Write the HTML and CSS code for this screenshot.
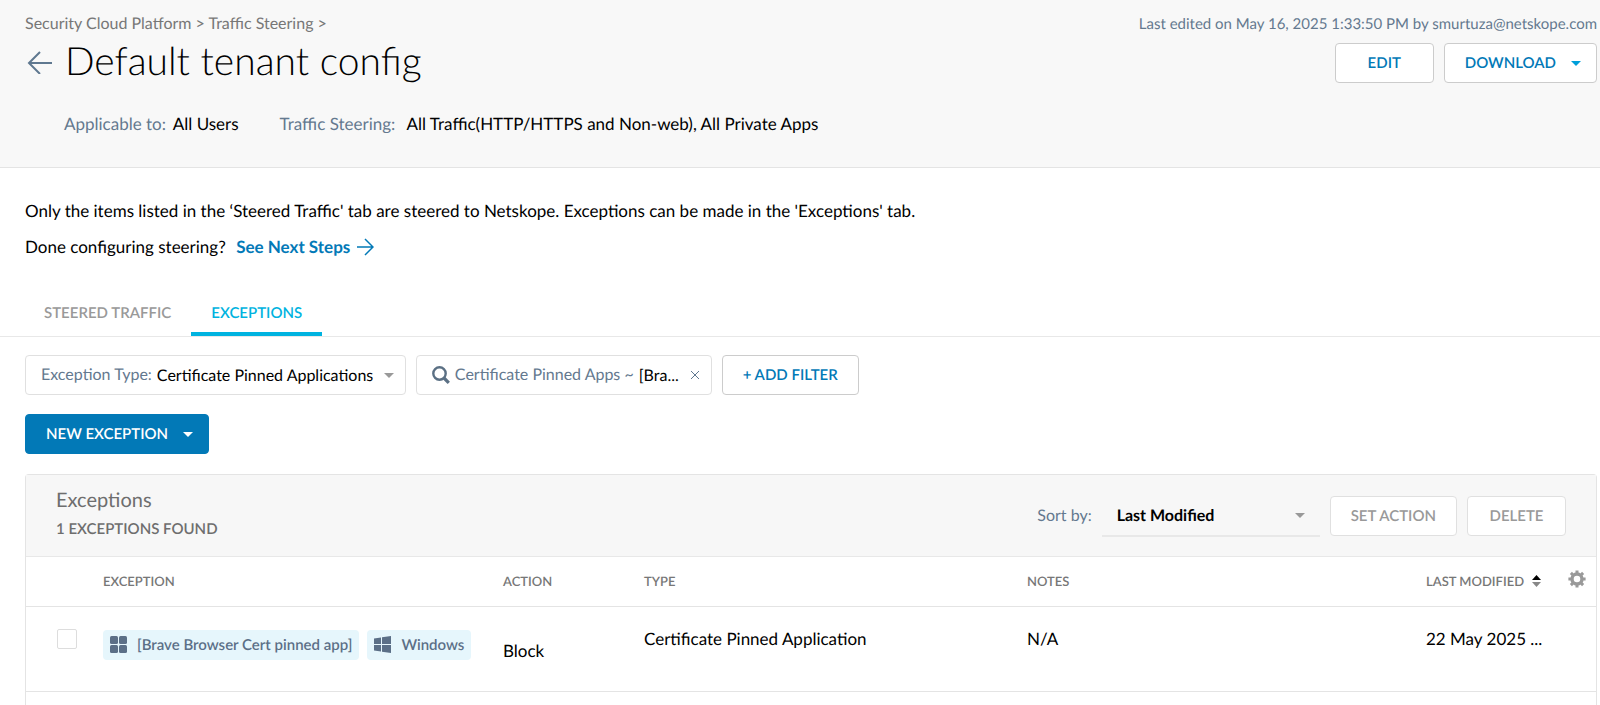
FILE: index.html
```
<!DOCTYPE html>
<html lang="en">
<head>
    <meta charset="UTF-8">
    <meta name="viewport" content="width=device-width, initial-scale=1.0">
    <title>Default tenant config</title>
    <link rel="stylesheet" href="styles.css">
</head>
<body>
    <header class="page-header">
        <div class="header-main">
            <nav class="breadcrumb">
                <a href="#">Security Cloud Platform</a> &gt; <a href="#">Traffic Steering</a> &gt;
            </nav>
            <div class="title-row">
                <a class="back" href="#" aria-label="Back">
                    <svg width="26" height="26" viewBox="0 0 26 26" fill="none" stroke="#5f7890" stroke-width="2">
                        <path d="M25 15H2M13 4L2 15l11 11"/>
                    </svg>
                </a>
                <h1>Default tenant config</h1>
            </div>
            <div class="summary">
                <div><span class="muted">Applicable to:</span> All Users</div>
                <div><span class="muted">Traffic Steering:</span>&nbsp; All Traffic(HTTP/HTTPS and Non-web), All Private Apps</div>
            </div>
        </div>
        <div class="header-side">
            <p class="edited">Last edited on May 16, 2025 1:33:50 PM by smurtuza@netskope.com</p>
            <div class="actions">
                <button type="button" class="btn btn-edit">EDIT</button>
                <button type="button" class="btn">DOWNLOAD <span class="caret caret-blue"></span></button>
            </div>
        </div>
    </header>

    <main>
        <section class="intro">
            <p>Only the items listed in the ‘Steered Traffic' tab are steered to Netskope. Exceptions can be made in the 'Exceptions' tab.</p>
            <p>Done configuring steering?
                <a class="next" href="#">See Next Steps
                    <svg width="18" height="18" viewBox="0 0 18 18" fill="none" stroke="currentColor" stroke-width="1.5">
                        <path d="M1 9h15.500M9 1l8 8-8 8"/>
                    </svg>
                </a>
            </p>
        </section>

        <nav class="tabs">
            <a href="#" class="tab">STEERED TRAFFIC</a>
            <a href="#" class="tab active">EXCEPTIONS</a>
        </nav>

        <div class="content">
            <div class="filters">
                <div class="filter">
                    <label class="muted" for="exception-type">Exception Type:</label>
                    <select id="exception-type">
                        <option>Certificate Pinned Applications</option>
                    </select>
                    <span class="caret"></span>
                </div>
                <div class="filter filter-search">
                    <svg width="18" height="18" viewBox="0 0 18 18" fill="none" stroke="#5b7084">
                        <circle cx="7.500" cy="7.500" r="6.200" stroke-width="2.400"/>
                        <path d="M12 12l4.800 4.800" stroke-width="3.200"/>
                    </svg>
                    <label class="muted" for="app-search">Certificate Pinned Apps ~</label>
                    <input type="text" id="app-search" value="[Bra...">
                    <button type="button" class="clear" aria-label="Remove filter">
                        <svg width="10" height="10" viewBox="0 0 10 10" stroke="#5f7890">
                            <path d="M1 1l8 8M9 1L1 9"/>
                        </svg>
                    </button>
                </div>
                <button type="button" class="btn">+ ADD FILTER</button>
            </div>

            <button type="button" class="btn btn-primary">NEW EXCEPTION <span class="caret caret-white"></span></button>

            <section class="panel">
                <div class="panel-header">
                    <div>
                        <h2>Exceptions</h2>
                        <p class="count">1 EXCEPTIONS FOUND</p>
                    </div>
                    <div class="panel-tools">
                        <label class="muted" for="sort">Sort by:</label>
                        <div class="sort">
                            <select id="sort">
                                <option>Last Modified</option>
                            </select>
                            <span class="caret"></span>
                        </div>
                        <button type="button" class="btn btn-off" disabled>SET ACTION</button>
                        <button type="button" class="btn btn-off btn-delete" disabled>DELETE</button>
                    </div>
                </div>

                <table>
                    <colgroup>
                        <col class="col-check">
                        <col class="col-exception">
                        <col class="col-action">
                        <col class="col-type">
                        <col>
                        <col class="col-modified">
                        <col class="col-gear">
                    </colgroup>
                    <thead>
                        <tr>
                            <th></th>
                            <th>EXCEPTION</th>
                            <th>ACTION</th>
                            <th>TYPE</th>
                            <th>NOTES</th>
                            <th>
                                <button type="button" class="sort-toggle">LAST MODIFIED
                                    <svg width="9" height="12" viewBox="0 0 9 12">
                                        <path d="M0 5l4.500-5L9 5z" fill="#000"/>
                                        <path d="M0 7h9l-4.500 5z" fill="#888"/>
                                    </svg>
                                </button>
                            </th>
                            <th>
                                <button type="button" class="gear" aria-label="Table settings">
                                    <svg width="18" height="18" viewBox="-9 -9 18 18" fill="none" stroke="#999">
                                        <circle r="5" stroke-width="3.400"/>
                                        <path d="M0-6v-2.600M0 6v2.600M-6 0h-2.600M6 0h2.600M4.300-4.300l1.800-1.800M-4.300-4.300l-1.800-1.800M4.300 4.300l1.800 1.800M-4.300 4.300l-1.800 1.800" stroke-width="3"/>
                                    </svg>
                                </button>
                            </th>
                        </tr>
                    </thead>
                    <tbody>
                        <tr>
                            <td class="cell-check"><input type="checkbox" aria-label="Select exception"></td>
                            <td>
                                <div class="tags">
                                    <span class="tag">
                                        <svg width="17" height="17" viewBox="0 0 17 17" fill="#5b6f87">
                                            <rect width="8" height="8" rx="1.500"/>
                                            <rect x="9" width="8" height="8" rx="1.500"/>
                                            <rect y="9" width="8" height="8" rx="1.500"/>
                                            <rect x="9" y="9" width="8" height="8" rx="1.500"/>
                                        </svg>
                                        [Brave Browser Cert pinned app]
                                    </span>
                                    <span class="tag">
                                        <svg width="17" height="17" viewBox="0 0 17 17" fill="#5b6f87">
                                            <path d="M0 2.500l7-1v6.600H0zM8 1.300L17 0v8.100H8zM0 9h7v6.500l-7-1zM8 9h9v8l-9-1.300z"/>
                                        </svg>
                                        Windows
                                    </span>
                                </div>
                            </td>
                            <td class="cell-action">Block</td>
                            <td>Certificate Pinned Application</td>
                            <td>N/A</td>
                            <td>22 May 2025 ...</td>
                            <td></td>
                        </tr>
                    </tbody>
                </table>
            </section>
        </div>
    </main>
</body>
</html>
```

FILE: styles.css
```
* {
    box-sizing: border-box;
}
body {
    display: flex;
    flex-direction: column;
    min-height: 100vh;
    margin: 0;
    font-family: Lato, sans-serif;
    font-size: 17px;
    line-height: 24px;
    color: #000;
    background: #fff;
    text-rendering: geometricPrecision;
}
h1, h2, p {
    margin: 0;
}
a {
    color: inherit;
    text-decoration: none;
}
svg {
    display: block;
    flex: none;
}
button, select, input {
    font-family: inherit;
    color: inherit;
    text-rendering: inherit;
}
button {
    cursor: pointer;
}
.muted {
    color: #64798f;
}

/* Header */
.page-header {
    display: flex;
    justify-content: space-between;
    padding: 12px 3px 31px 25px;
    background: #f8f8f8;
    border-bottom: 1px solid #e4e4e4;
}
.breadcrumb {
    font-size: 16px;
    line-height: 23px;
    color: #777;
}
.title-row {
    display: flex;
    align-items: center;
    gap: 12px;
    padding-left: 2px;
}
h1 {
    font-size: 39px;
    font-weight: 300;
    line-height: 52px;
}
.summary {
    display: flex;
    gap: 41px;
    margin-top: 25px;
    padding-left: 39px;
}
.summary .muted {
    margin-right: 3px;
}
.header-side {
    display: flex;
    flex-direction: column;
    align-items: flex-end;
}
.edited {
    font-size: 15px;
    color: #64798f;
}
.actions {
    display: flex;
    gap: 10px;
    margin-top: 7px;
}

/* Buttons */
.btn {
    display: inline-flex;
    align-items: center;
    justify-content: center;
    gap: 15px;
    height: 40px;
    padding: 0 20px;
    border: 1px solid #ccc;
    border-radius: 4px;
    background: #fff;
    font-size: 15px;
    font-weight: 600;
    color: #0279b7;
}
.btn .caret {
    margin-right: -5px;
}
.btn-edit, .btn-delete {
    min-width: 99px;
}
.btn-primary {
    align-self: flex-start;
    margin-top: 19px;
    border-color: #0279b7;
    background: #0279b7;
    color: #fff;
}
.btn-off {
    border-color: #e0e0e0;
    color: #999;
}
.caret {
    flex: none;
    border: 5px solid transparent;
    border-top-color: #999;
    border-bottom: 0;
}
.caret-blue {
    border-top-color: #009fda;
}
.caret-white {
    border-top-color: #fff;
}

/* Intro */
.intro {
    display: flex;
    flex-direction: column;
    gap: 12px;
    padding: 31px 25px 27px;
}
.next {
    display: inline-flex;
    align-items: center;
    gap: 6px;
    margin-left: 6px;
    font-weight: 700;
    color: #0279b7;
}

/* Tabs */
.tabs {
    display: flex;
    padding-left: 24px;
    border-bottom: 1px solid #e8e8e8;
}
.tab {
    padding: 15px 20px 7px;
    border-bottom: 4px solid transparent;
    font-size: 15px;
    font-weight: 600;
    color: #999;
}
.tab.active {
    border-color: #00b3e0;
    color: #00b3e0;
}

/* Filters */
main, .content, .panel {
    display: flex;
    flex: 1;
    flex-direction: column;
}
.content {
    padding: 18px 3px 0 25px;
}
.filters {
    display: flex;
    gap: 10px;
}
.filter {
    display: flex;
    align-items: center;
    gap: 5px;
    height: 40px;
    padding: 0 11px 0 15px;
    border: 1px solid #e0e0e0;
    border-radius: 4px;
    font-size: 16px;
}
.filter select, .filter input {
    padding: 0;
    border: 0;
    background: none;
    font-size: 16px;
    appearance: none;
}
.filter .caret {
    margin-left: 5px;
}
.filter input {
    width: 46px;
}
.filter .clear {
    padding: 0;
    border: 0;
    background: none;
}

/* Exceptions panel */
.panel {
    margin-top: 20px;
    border: 1px solid #e4e4e4;
    border-bottom: 0;
    border-radius: 4px 4px 0 0;
}
.panel-header {
    display: flex;
    align-items: flex-start;
    justify-content: space-between;
    padding: 11px 30px 15px;
    border-bottom: 1px solid #e8e8e8;
    background: #f7f7f7;
}
h2 {
    font-size: 20px;
    font-weight: 400;
    line-height: 28px;
    color: #6e6e6e;
}
.count {
    margin-top: 3px;
    font-size: 15px;
    font-weight: 600;
    color: #6e6e6e;
}
.panel-tools {
    display: flex;
    align-items: center;
    gap: 10px;
    padding-top: 9px;
    font-size: 16px;
}
.sort {
    display: flex;
    align-items: center;
    width: 218px;
    height: 42px;
    padding: 0 15px;
    border-bottom: 2px solid #e8e8e8;
}
.sort select {
    flex: 1;
    padding: 0;
    border: 0;
    background: none;
    font-size: 16px;
    font-weight: 700;
    appearance: none;
}
table {
    width: 100%;
    table-layout: fixed;
    border-collapse: collapse;
}
.col-check {
    width: 67px;
}
.col-exception {
    width: 400px;
}
.col-action {
    width: 141px;
}
.col-type {
    width: 383px;
}
.col-modified {
    width: 142px;
}
.col-gear {
    width: 38px;
}
th, td {
    padding: 0 0 0 10px;
    border-bottom: 1px solid #e4e4e4;
    text-align: left;
    white-space: nowrap;
}
th {
    height: 49px;
    font-size: 13px;
    font-weight: 600;
    color: #777;
}
td {
    height: 85px;
    padding-top: 20px;
    vertical-align: top;
}
.sort-toggle, .gear {
    display: flex;
    align-items: center;
    gap: 8px;
    padding: 0;
    border: 0;
    background: none;
    font-size: 13px;
    font-weight: 600;
}
.gear {
    padding-bottom: 4px;
}
.cell-check {
    padding-left: 31px;
}
.cell-check input {
    display: block;
    width: 20px;
    height: 20px;
    margin: 2px 0 0;
    border: 1px solid #ddd;
    border-radius: 2px;
    background: #fff;
    appearance: none;
}
.cell-action {
    padding-top: 32px;
}
.tags {
    display: flex;
    gap: 8px;
    padding-top: 3px;
}
.tag {
    display: flex;
    align-items: center;
    gap: 10px;
    height: 30px;
    padding: 0 7px;
    border-radius: 4px;
    background: #e6f6fc;
    font-size: 15px;
    font-weight: 600;
    color: #5b6f87;
}
```
